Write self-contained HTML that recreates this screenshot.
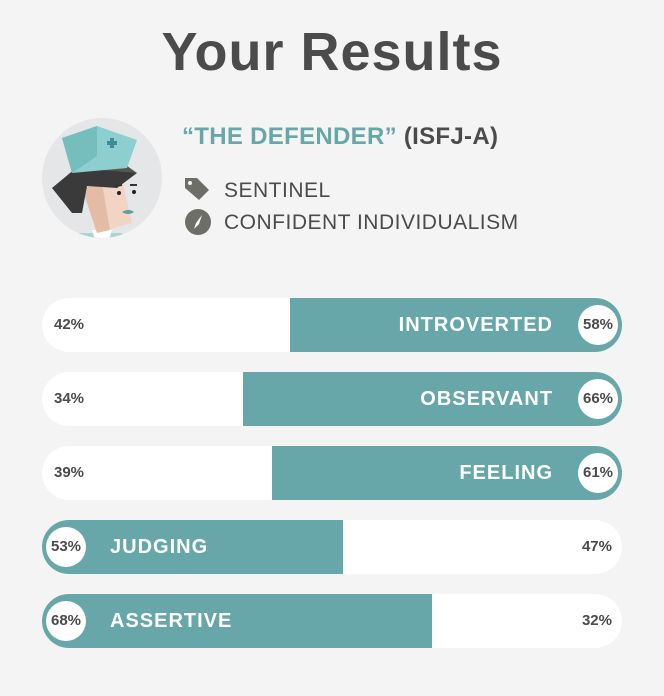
<!DOCTYPE html>
<html><head><style>
body{margin:0;width:664px;height:696px;background:#f4f4f4;font-family:"Liberation Sans",sans-serif;position:relative;overflow:hidden}
h1{position:absolute;top:21px;left:0;width:664px;text-align:center;margin:0;font-size:54px;font-weight:bold;color:#4b4b4b;letter-spacing:1px}
.t{position:absolute;color:#4b4b4b;font-size:21px;letter-spacing:0.5px}
.bar{position:absolute;left:42px;width:580px;height:54px;border-radius:27px;background:#fff;overflow:hidden}
.fill{position:absolute;top:0;height:54px;background:#68a7a9}
.lbl{position:absolute;top:0;line-height:54px;font-weight:bold;font-size:20px;color:#fff;letter-spacing:1px}
.pct{position:absolute;top:0;line-height:54px;font-weight:bold;font-size:15px;color:#4b4b4b}
.c{position:absolute;top:7px;width:40px;height:40px;border-radius:50%;background:#fff;text-align:center;line-height:40px;font-weight:bold;font-size:15px;color:#4b4b4b}
</style></head><body>
<h1>Your Results</h1>
<svg style="position:absolute;left:42px;top:118px" width="120" height="120" viewBox="0 0 120 120">
<defs><clipPath id="cp"><circle cx="60" cy="60" r="60"/></clipPath></defs>
<circle cx="60" cy="60" r="60" fill="#e5e6e8"/>
<g clip-path="url(#cp)">
<polygon points="36,115 80,115 90,125 28,125" fill="#a8d5d4"/>
<polygon points="50,112 70,112 66,125 54,125" fill="#fff"/>
<polygon points="40,70 80,60 90,105 55,115" fill="#f2d4c4"/>
<polygon points="40,70 60,65 68,112 55,115" fill="#e4bca6"/>
<polygon points="10,70 40,45 95,55 75,70 45,68 40,95 30,95" fill="#3a3a3a"/>
<polygon points="30,45 60,30 95,55 60,52" fill="#555"/>
<polygon points="20,20 55,8 95,22 85,50 30,55" fill="#8ccfce"/>
<polygon points="20,20 55,8 55,38 30,55" fill="#76bdbd"/>
<path d="M70 20v10M65 25h10" stroke="#3e8c97" stroke-width="4"/>
<circle cx="77" cy="75" r="2" fill="#222"/><circle cx="92" cy="74" r="2" fill="#222"/>
<path d="M72 68l8 -1M88 67l7 0" stroke="#333" stroke-width="2"/>
<path d="M80 94q7 -4 12 0q-6 4 -12 0z" fill="#5aa0a3"/>
</g></svg>
<div class="t" style="left:182px;top:123px;font-size:24px;font-weight:bold;letter-spacing:0.3px"><span style="color:#68a7a9">“THE DEFENDER”</span> (ISFJ-A)</div>
<svg style="position:absolute;left:183px;top:176px" width="28" height="26" viewBox="0 0 28 26"><path d="M2 2h12l12 12-10 10-14-12z" fill="#6e6e68"/><circle cx="7" cy="7" r="2" fill="#f4f4f4"/></svg>
<div class="t" style="left:224px;top:179px">SENTINEL</div>
<svg style="position:absolute;left:184px;top:208px" width="28" height="28" viewBox="0 0 28 28"><circle cx="14" cy="14" r="13" fill="#6e6e68"/><path d="M18 7l-6 8-2 6 5-5z" fill="#fff"/></svg>
<div class="t" style="left:224px;top:211px">CONFIDENT INDIVIDUALISM</div>

<div class="bar" style="top:298px"><div class="fill" style="left:248px;right:0"></div><span class="pct" style="left:12px">42%</span><span class="lbl" style="right:69px">INTROVERTED</span><div class="c" style="right:4px">58%</div></div>
<div class="bar" style="top:372px"><div class="fill" style="left:201px;right:0"></div><span class="pct" style="left:12px">34%</span><span class="lbl" style="right:69px">OBSERVANT</span><div class="c" style="right:4px">66%</div></div>
<div class="bar" style="top:446px"><div class="fill" style="left:230px;right:0"></div><span class="pct" style="left:12px">39%</span><span class="lbl" style="right:69px">FEELING</span><div class="c" style="right:4px">61%</div></div>
<div class="bar" style="top:520px"><div class="fill" style="left:0;width:301px"></div><div class="c" style="left:4px">53%</div><span class="lbl" style="left:68px">JUDGING</span><span class="pct" style="right:10px">47%</span></div>
<div class="bar" style="top:594px"><div class="fill" style="left:0;width:390px"></div><div class="c" style="left:4px">68%</div><span class="lbl" style="left:68px">ASSERTIVE</span><span class="pct" style="right:10px">32%</span></div>
</body></html>
